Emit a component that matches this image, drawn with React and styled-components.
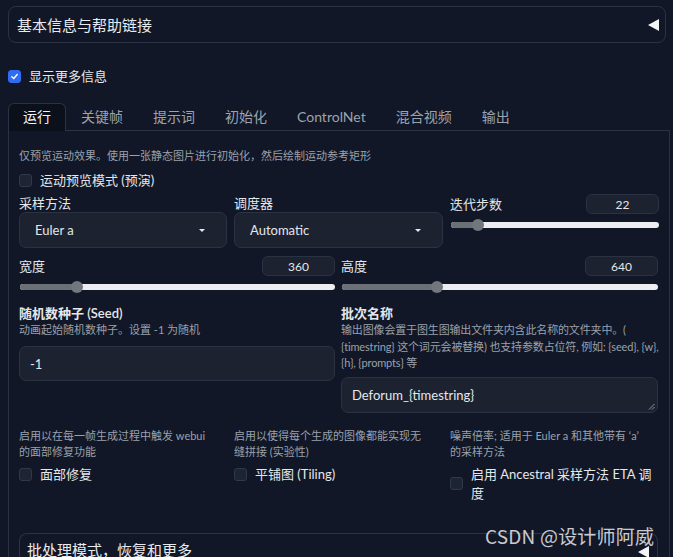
import React from "react"
import styled, { createGlobalStyle } from "styled-components"

const GlobalStyle = createGlobalStyle`
  body {
    margin: 0;
    background: #111726;
    font-family: "Lato", "Noto Sans CJK SC", sans-serif;
    color: #e5e7eb;
    overflow: hidden;
  }
`

const Page = styled.div`
  position: relative;
  width: 673px;
  height: 557px;
  box-sizing: border-box;
  padding: 6px 3px 0 8px;
  overflow: hidden;
`

// accordion header (top one and the nested one at the bottom)
const Accordion = styled.div`
  display: flex;
  align-items: ${(p) => (p.$top ? "flex-start" : "center")};
  justify-content: space-between;
  height: ${(p) => p.$h}px;
  box-sizing: border-box;
  margin: ${(p) => p.$m};
  padding: ${(p) => p.$pad};
  border: 1px solid #2a3344;
  border-bottom: ${(p) => (p.$open ? "none" : "1px solid #2a3344")};
  border-radius: ${(p) => (p.$open ? "8px 8px 0 0" : "8px")};
  font-size: 15px;
  color: #e8eaee;
`

const Arrow = styled.span`
  width: 0;
  height: 0;
  margin-top: ${(p) => p.$mt || 0}px;
  border-top: 6px solid transparent;
  border-bottom: 6px solid transparent;
  border-right: 11px solid #f3f4f6;
`

const CheckRow = styled.label`
  display: flex;
  align-items: center;
  gap: ${(p) => p.$gap || 8}px;
  margin-top: ${(p) => p.$mt || 0}px;
  font-size: 13px;
  line-height: 19px;
  color: #e5e7eb;
`

const Box = styled.span`
  flex: none;
  width: 13px;
  height: 13px;
  border-radius: 3px;
  box-sizing: border-box;
  display: flex;
  align-items: center;
  justify-content: center;
  background: ${(p) => (p.$on ? "#2f6cf0" : "#1d2433")};
  border: 1px solid ${(p) => (p.$on ? "#2f6cf0" : "#2f3949")};
`

const TabBar = styled.div`
  display: flex;
  margin-top: 17px;
  border-bottom: 1px solid #2a3344;
`

const Tab = styled.div`
  height: 28px;
  box-sizing: border-box;
  padding: 0 14px 3px;
  display: flex;
  align-items: center;
  font-size: 14px;
  color: ${(p) => (p.$active ? "#f3f4f6" : "#9ca3af")};
  background: ${(p) => (p.$active ? "#0c101b" : "transparent")};
  border: 1px solid ${(p) => (p.$active ? "#2a3344" : "transparent")};
  border-bottom: none;
  border-radius: 6px 6px 0 0;
  margin-bottom: -1px;
`

const Panel = styled.div`
  border-left: 1px solid #2a3344;
  border-right: 1px solid #2a3344;
  padding: 17px 11px 0 10px;
  height: 440px;
`

const Help = styled.div`
  font-size: 11px;
  line-height: ${(p) => p.$lh || 16}px;
  letter-spacing: ${(p) => p.$ls || 0}px;
  color: #9aa1ad;
  white-space: nowrap;
`

const Grid = styled.div`
  display: grid;
  grid-template-columns: ${(p) => p.$cols};
  column-gap: ${(p) => p.$gap}px;
  margin-top: ${(p) => p.$mt}px;
  align-items: start;
`

const Label = styled.div`
  font-size: 13px;
  line-height: 18px;
  color: #e5e7eb;
  font-weight: ${(p) => (p.$bold ? 600 : 400)};
`

const Field = styled.div`
  height: ${(p) => p.$h}px;
  margin-top: ${(p) => p.$mt || 0}px;
  box-sizing: border-box;
  display: flex;
  align-items: center;
  justify-content: space-between;
  padding: 0 21px 0 ${(p) => p.$pl || 15}px;
  background: #1c2230;
  border: 1px solid #2a3343;
  border-radius: 7px;
  font-size: 13px;
  color: #e5e7eb;
  position: relative;
`

const Caret = styled.span`
  width: 0;
  height: 0;
  border-left: 3.5px solid transparent;
  border-right: 3.5px solid transparent;
  border-top: 3.5px solid #e5e7eb;
`

const Grip = styled.svg`
  position: absolute;
  right: 2px;
  bottom: 2px;
`

const SliderHead = styled.div`
  display: flex;
  align-items: center;
  justify-content: space-between;
  height: 20px;
`

const NumBox = styled.div`
  width: 73px;
  height: 20px;
  box-sizing: border-box;
  display: flex;
  align-items: center;
  justify-content: center;
  background: #1c2230;
  border: 1px solid #2a3343;
  border-radius: 6px;
  font-size: 12px;
  color: #e5e7eb;
`

const Track = styled.div`
  position: relative;
  height: 6px;
  margin: 8px 0 0 1px;
  border-radius: 3px;
  background: #eceef1;
`

const Fill = styled.div`
  height: 100%;
  border-radius: 3px 0 0 3px;
  background: #6b6f76;
`

const Thumb = styled.div`
  position: absolute;
  top: -3px;
  width: 12px;
  height: 12px;
  margin-left: -6px;
  border-radius: 50%;
  background: #72767d;
`

const Col = styled.div`
  display: flex;
  flex-direction: column;
`

const Watermark = styled.div`
  position: absolute;
  left: 485px;
  top: 522px;
  font-size: 19px;
  color: rgba(235, 236, 240, 0.85);
  font-family: "Noto Sans CJK SC", "DejaVu Sans", sans-serif;
  letter-spacing: 0.2px;
`

const Check = ({ on }) => (
  <Box $on={on}>
    {on && (
      <svg width="9" height="9" viewBox="0 0 10 10">
        <path d="M2 5.2 L4.2 7.3 L8 2.8" fill="none" stroke="#fff" strokeWidth="1.6" strokeLinecap="round" />
      </svg>
    )}
  </Box>
)

const Slider = ({ label, value, pct }) => (
  <Col>
    <SliderHead>
      <Label>{label}</Label>
      <NumBox>{value}</NumBox>
    </SliderHead>
    <Track>
      <Fill style={{ width: pct + "%" }} />
      <Thumb style={{ left: pct + "%" }} />
    </Track>
  </Col>
)

const tabs = ["运行", "关键帧", "提示词", "初始化", "ControlNet", "混合视频", "输出"]

export default function App() {
  return (
    <Page>
      <GlobalStyle />
      <Accordion $h={37} $m="0 4px 0 0" $pad="0 6px 0 8px">
        基本信息与帮助链接
        <Arrow />
      </Accordion>

      <CheckRow $mt={24}>
        <Check on />
        显示更多信息
      </CheckRow>

      <TabBar>
        {tabs.map((t, i) => (
          <Tab key={t} $active={i === 0}>{t}</Tab>
        ))}
      </TabBar>

      <Panel>
        <Help>仅预览运动效果。使用一张静态图片进行初始化，然后绘制运动参考矩形</Help>
        <CheckRow $mt={7}>
          <Check />
          运动预览模式 (预演)
        </CheckRow>

        <Grid $cols="208px 209px 209px" $gap={7} $mt={4}>
          <Col>
            <Label>采样方法</Label>
            <Field $h={36}>Euler a<Caret /></Field>
          </Col>
          <Col>
            <Label>调度器</Label>
            <Field $h={36}>Automatic<Caret /></Field>
          </Col>
          <Slider label="迭代步数" value="22" pct={13} />
        </Grid>

        <Grid $cols="316px 317px" $gap={6} $mt={8}>
          <Slider label="宽度" value="360" pct={18} />
          <Slider label="高度" value="640" pct={30} />
        </Grid>

        <Grid $cols="316px 317px" $gap={6} $mt={14}>
          <Col>
            <Label $bold>随机数种子 (Seed)</Label>
            <Help>动画起始随机数种子。设置 -1 为随机</Help>
            <Field $h={35} $mt={8} $pl={10}>-1</Field>
          </Col>
          <Col>
            <Label $bold>批次名称</Label>
            <Help $lh={16.5} $ls={-0.15}>
              输出图像会置于图生图输出文件夹内含此名称的文件夹中。(
              <br />
              {"{timestring} 这个词元会被替换) 也支持参数占位符, 例如: {seed}, {w},"}
              <br />
              {"{h}, {prompts} 等"}
            </Help>
            <Field $h={36} $mt={5} $pl={10}>
              {"Deforum_{timestring}"}
              <Grip width="7" height="7" viewBox="0 0 7 7">
                <path d="M6.5 1 L1 6.5 M6.5 4 L4 6.5" stroke="#9aa1ad" strokeWidth="0.9" />
              </Grip>
            </Field>
          </Col>
        </Grid>

        <Grid $cols="208px 209px 209px" $gap={7} $mt={15}>
          <Col>
            <Help>启用以在每一帧生成过程中触发 webui<br />的面部修复功能</Help>
            <CheckRow $mt={5}>
              <Check />
              面部修复
            </CheckRow>
          </Col>
          <Col>
            <Help>启用以使得每个生成的图像都能实现无<br />缝拼接 (实验性)</Help>
            <CheckRow $mt={5}>
              <Check />
              平铺图 (Tiling)
            </CheckRow>
          </Col>
          <Col>
            <Help>噪声倍率; 适用于 Euler a 和其他带有 ‘a’<br />的采样方法</Help>
            <CheckRow $mt={5}>
              <Check />
              <span>启用 Ancestral 采样方法 ETA 调<br />度</span>
            </CheckRow>
          </Col>
        </Grid>

        <Accordion $open $top $h={40} $m="30px 0 0 0" $pad="5px 8px 0 7px">
          批处理模式，恢复和更多
          <Arrow $mt={7} />
        </Accordion>
      </Panel>

      <Watermark>CSDN @设计师阿威</Watermark>
    </Page>
  )
}
